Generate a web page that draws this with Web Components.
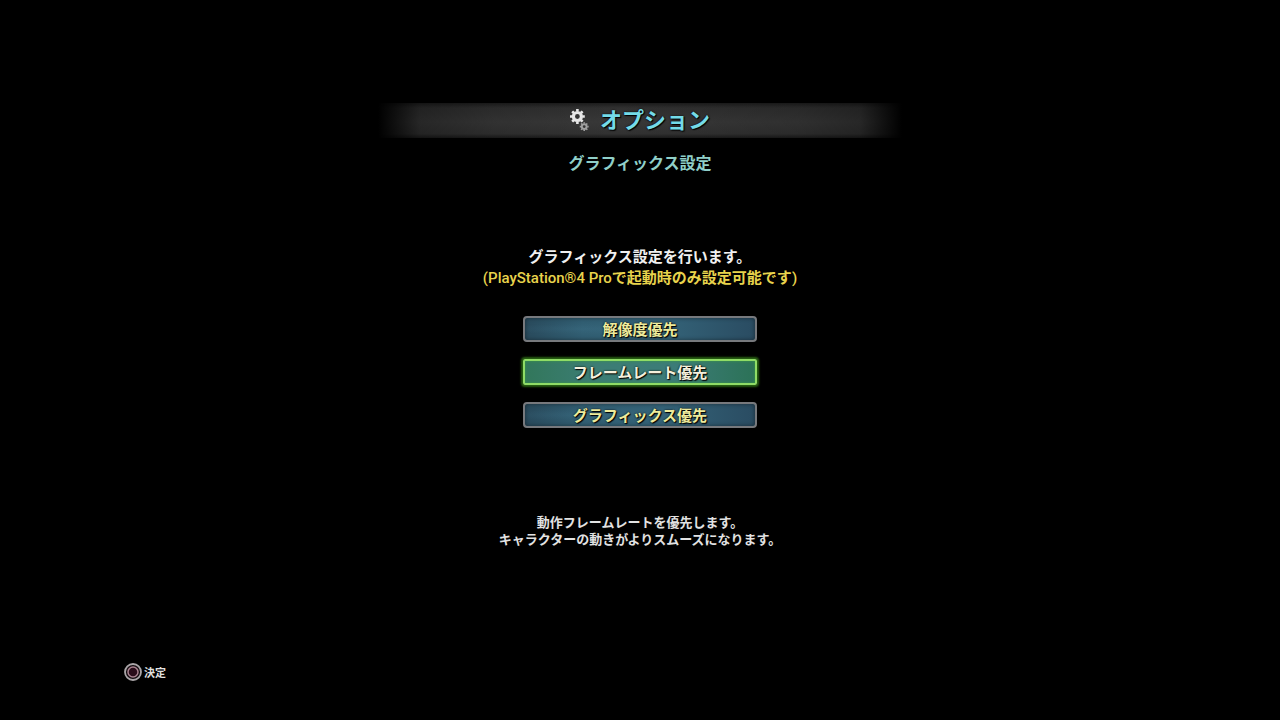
<!DOCTYPE html>
<html lang="ja">
<head>
<meta charset="utf-8">
<meta name="viewport" content="width=device-width, initial-scale=1">
<title>オプション</title>
<style>
  body {
    margin: 0;
    background: #000;
    color: #f0f0f0;
    font-family: "Noto Sans CJK JP", sans-serif;
    font-weight: 700;
  }
</style>
</head>
<body>
<options-screen>
  <title-bar slot="title">オプション</title-bar>
  <span slot="subtitle">グラフィックス設定</span>
  <span slot="message">グラフィックス設定を行います。</span>
  <note-text slot="message"><span slot="product">(PlayStation®4 Pro</span>で起動時のみ設定可能です<span slot="close">)</span></note-text>
  <option-button slot="choices">解像度優先</option-button>
  <option-button slot="choices" selected>フレームレート優先</option-button>
  <option-button slot="choices">グラフィックス優先</option-button>
  <span slot="description">動作フレームレートを優先します。</span>
  <span slot="description">キャラクターの動きがよりスムーズになります。</span>
  <key-hint slot="hint">決定</key-hint>
</options-screen>

<script>
class OptionsScreen extends HTMLElement {
  constructor() {
    super();
    this.attachShadow({ mode: 'open' });
    this.shadowRoot.innerHTML = `
      <style>
        :host {
          display: flex;
          flex-direction: column;
          box-sizing: border-box;
          min-height: 100vh;
          padding: 103px 0 39px;
        }
        main {
          display: flex;
          flex-direction: column;
          align-items: center;
          text-align: center;
        }
        h2 {
          margin: 12px 0 71px;
          color: #8fcfc8;
          font-size: 16px;
          line-height: 24px;
        }
        .message,
        .description {
          display: flex;
          flex-direction: column;
        }
        .message {
          font-size: 15px;
          line-height: 21px;
        }
        .choices {
          display: flex;
          flex-direction: column;
          gap: 17px;
          width: 234px;
          margin: 27px 0 85px;
        }
        .description {
          color: #e2e2e2;
          font-size: 13px;
          line-height: 17px;
        }
        footer {
          margin-top: auto;
          padding-left: 124px;
        }
      </style>
      <main>
        <slot name="title"></slot>
        <h2><slot name="subtitle"></slot></h2>
        <div class="message"><slot name="message"></slot></div>
        <div class="choices"><slot name="choices"></slot></div>
        <div class="description" aria-live="polite"><slot name="description"></slot></div>
      </main>
      <footer><slot name="hint"></slot></footer>
    `;
  }

  connectedCallback() {
    this.addEventListener('choose', (event) => {
      this.querySelectorAll('option-button').forEach((button) => {
        button.toggleAttribute('selected', button === event.target);
      });
    });
  }
}

class GearsIcon extends HTMLElement {
  constructor() {
    super();
    this.attachShadow({ mode: 'open' });
    this.shadowRoot.innerHTML = `
      <style>
        :host {
          display: block;
          width: 20px;
          height: 24px;
        }
        svg {
          display: block;
        }
      </style>
      <svg width="20" height="24" viewBox="0 0 20 24" aria-hidden="true">
        <defs>
          <g id="gear">
            <circle r="4" fill="none" stroke-width="3.2"/>
            <g stroke-width="2.6">
              <path d="M0-5V-7.4M0 5V7.4M-5 0H-7.4M5 0H7.4"/>
              <path d="M-3.5-3.5L-5.2-5.2M3.5-3.5L5.2-5.2M-3.5 3.5L-5.2 5.2M3.5 3.5L5.2 5.2"/>
            </g>
          </g>
        </defs>
        <use href="#gear" transform="translate(7.4 9.5)" stroke="#e6e6e6"/>
        <use href="#gear" transform="translate(14.2 19.6) scale(.6)" stroke="#a0a0a0"/>
      </svg>
    `;
  }
}

class TitleBar extends HTMLElement {
  constructor() {
    super();
    this.attachShadow({ mode: 'open' });
    this.shadowRoot.innerHTML = `
      <style>
        :host {
          display: block;
          width: 524px;
          max-width: 100%;
          background:
            linear-gradient(to right, #000, rgba(0,0,0,.3) 8%, rgba(0,0,0,.12) 22%, transparent 45%, rgba(0,0,0,.15) 80%, rgba(0,0,0,.3) 92%, #000),
            linear-gradient(#1c1c1c, #303030 14%, #383838 55%, #323232 88%, #1a1a1a);
        }
        h1 {
          display: flex;
          align-items: center;
          justify-content: center;
          gap: 10px;
          margin: 0;
          padding-bottom: 4px;
          color: #74dbe8;
          font-size: 22px;
          line-height: 31px;
          text-shadow: 0 0 2px #000, 1px 1px 1px #000;
        }
      </style>
      <h1><gears-icon></gears-icon><span><slot></slot></span></h1>
    `;
  }
}

class NoteText extends HTMLElement {
  constructor() {
    super();
    this.attachShadow({ mode: 'open' });
    this.shadowRoot.innerHTML = `
      <style>
        :host {
          display: block;
          color: #e8d34c;
        }
        .latin {
          font-family: Roboto, "Liberation Sans", sans-serif;
          font-weight: 500;
        }
      </style>
      <span class="latin"><slot name="product"></slot></span><slot></slot><span class="latin"><slot name="close"></slot></span>
    `;
  }
}

class OptionButton extends HTMLElement {
  constructor() {
    super();
    this.attachShadow({ mode: 'open' });
    this.shadowRoot.innerHTML = `
      <style>
        :host {
          display: block;
        }
        button {
          display: block;
          box-sizing: border-box;
          width: 100%;
          height: 26px;
          padding: 0;
          border: 2px solid #77797d;
          border-radius: 4px;
          background:
            radial-gradient(ellipse at 25% 50%, rgba(70,125,150,.2), transparent 35%),
            linear-gradient(to right, #294a5c, #315e72 25%, #346378 60%, #2a4c62);
          box-shadow: inset 0 0 4px rgba(0,0,0,.45);
          color: #eeeb9c;
          font: inherit;
          font-size: 15px;
          line-height: 22px;
          text-shadow: 0 0 2px #000, 1px 1px 1px #000;
        }
        button:focus {
          outline: none;
        }
        :host([selected]) button {
          border-color: #8fdc66;
          border-radius: 2px;
          background: linear-gradient(to right, #32775b, #3c7d74 30%, #3c7c78 65%, #2c7257);
          box-shadow: 0 0 2px 2px #285f12, inset 0 0 3px #3c9a45;
          color: #f4f0dc;
        }
      </style>
      <button type="button"><slot></slot></button>
    `;
    this.shadowRoot.querySelector('button').addEventListener('click', this._choose.bind(this));
  }

  static get observedAttributes() {
    return ['selected'];
  }

  attributeChangedCallback() {
    this.shadowRoot.querySelector('button').setAttribute('aria-pressed', this.hasAttribute('selected'));
  }

  _choose() {
    this.dispatchEvent(new Event('choose', { bubbles: true }));
  }
}

class KeyHint extends HTMLElement {
  constructor() {
    super();
    this.attachShadow({ mode: 'open' });
    this.shadowRoot.innerHTML = `
      <style>
        :host {
          display: flex;
          align-items: center;
          gap: 2px;
          color: #e2e2e2;
          font-size: 11px;
          line-height: 18px;
        }
      </style>
      <svg width="18" height="18" viewBox="0 0 18 18" aria-hidden="true">
        <circle cx="9" cy="9" r="8" fill="#130b0f" stroke="#aaa6a8" stroke-width="1.8"/>
        <circle cx="9" cy="9" r="5" fill="#2a0d1a" stroke="#a8828f" stroke-width="1.5"/>
      </svg>
      <span><slot></slot></span>
    `;
  }
}

customElements.define('options-screen', OptionsScreen);
customElements.define('gears-icon', GearsIcon);
customElements.define('title-bar', TitleBar);
customElements.define('note-text', NoteText);
customElements.define('option-button', OptionButton);
customElements.define('key-hint', KeyHint);
</script>
</body>
</html>
